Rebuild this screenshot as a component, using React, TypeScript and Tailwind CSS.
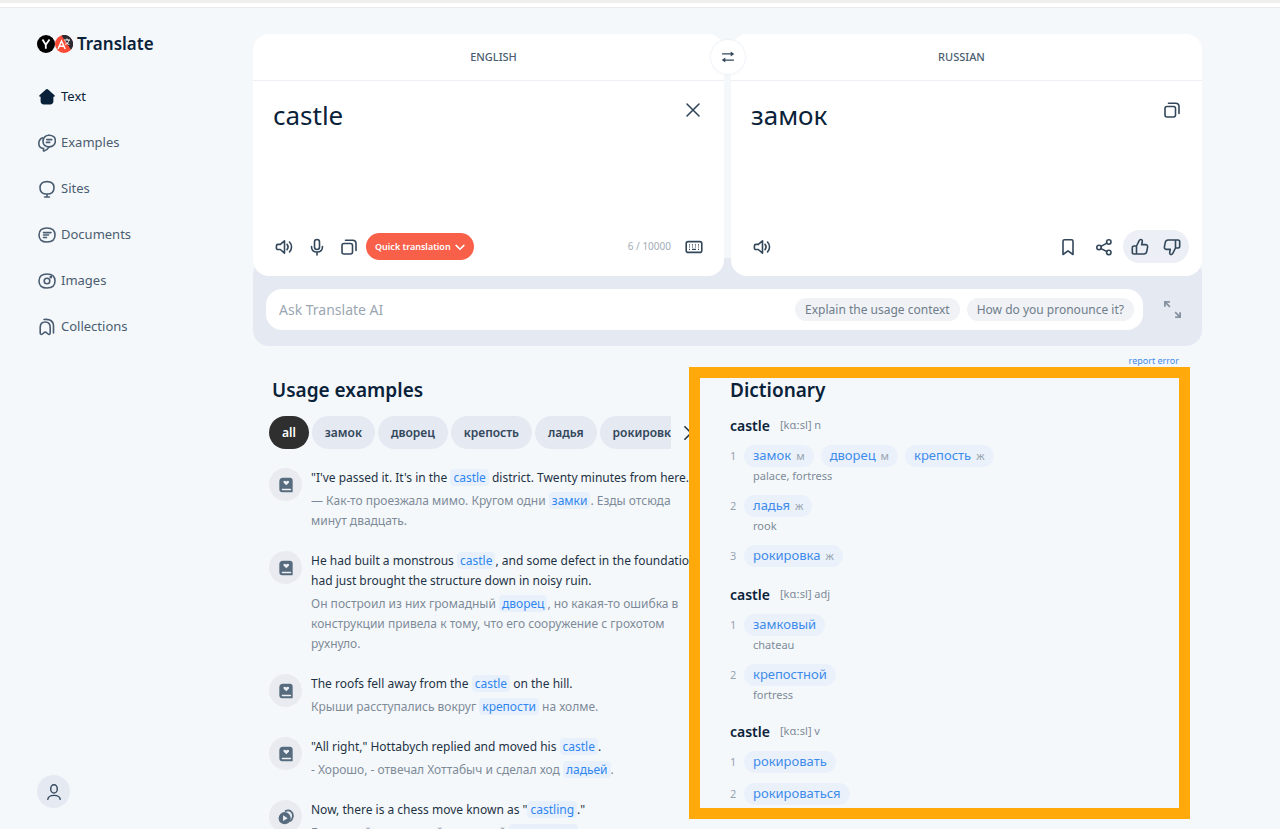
import type { ReactNode } from "react";

const NAV_ITEMS = [
  { label: "Text", icon: "home", active: true },
  { label: "Examples", icon: "chats" },
  { label: "Sites", icon: "sites" },
  { label: "Documents", icon: "docs" },
  { label: "Images", icon: "images" },
  { label: "Collections", icon: "collections" },
];

const FILTERS = ["замок", "дворец", "крепость", "ладья", "рокировка"];

const DICTIONARY = [
  {
    pos: "n",
    rows: [
      {
        words: [
          ["замок", "м"],
          ["дворец", "м"],
          ["крепость", "ж"],
        ],
        meaning: "palace, fortress",
      },
      { words: [["ладья", "ж"]], meaning: "rook" },
      { words: [["рокировка", "ж"]] },
    ],
  },
  {
    pos: "adj",
    rows: [
      { words: [["замковый"]], meaning: "chateau" },
      { words: [["крепостной"]], meaning: "fortress" },
    ],
  },
  {
    pos: "v",
    rows: [{ words: [["рокировать"]] }, { words: [["рокироваться"]] }],
  },
];

const ICONS: Record<string, ReactNode> = {
  home: (
    <path
      d="M7.600 1.700 1.500 7.200c-.7.6-.3 1.500.5 1.500h.6v4.600c0 2 1.200 3.200 3.200 3.200h6.400c2 0 3.200-1.200 3.200-3.200V8.700h.6c.8 0 1.200-.9.5-1.500l-6.100-5.500c-.8-.8-2-.8-2.800 0Z"
      fill="currentColor"
      stroke="none"
    />
  ),
  chats: (
    <>
      <path d="M11 1.200c3.800 0 6.400 2.100 6.400 5.400 0 3.800-2.700 6.100-6.200 6.300-1 1.700-2.900 3.400-5.200 4.100-.5.100-.7-.2-.6-.6l.2-1.900C2.600 14.100.8 12.200.8 9.500c0-2.600 1.400-4.700 3.800-5.700" />
      <path d="M11.200 12.900C7.400 12.900 5 10.800 5 7.500c0-3.800 2.600-6.300 6-6.300M8.800 5.600h5M8.400 8.400h3.300" />
    </>
  ),
  sites: <path d="M9 14c4.200 0 7-2 7-6.300S13.400 1.600 9 1.600 2 3.400 2 7.700 4.800 14 9 14Zm0 0v3M6.600 17h4.800" />,
  docs: (
    <>
      <path d="M9 2c5 0 8 2.200 8 7s-3 7-8 7-8-2.200-8-7 3-7 8-7Z" />
      <path d="M5.500 6.600h7.500M5.500 9h5M5.500 11.500h3" />
    </>
  ),
  images: (
    <>
      <path d="M9 2c5 0 8 2.200 8 7s-3 7-8 7-8-2.200-8-7 3-7 8-7Z" />
      <circle cx="9" cy="9" r="2.800" />
      <circle cx="12.800" cy="5.200" r=".6" fill="currentColor" />
    </>
  ),
  collections: (
    <>
      <path d="M2.200 9.500c0-3.400 1.400-5.500 5-5.500s5 2.100 5 5.500v5.600c0 1.300-1.200 1.800-2.100.9l-1.400-1.200c-.8-.8-2.100-.8-2.900 0L4.400 16c-.9.900-2.200.4-2.200-.9Z" />
      <path d="M6 1.500c6.500-.8 9.500 1.800 9.500 7V15" />
    </>
  ),
  sound: (
    <>
      <path d="M9.500 2.800v12.400L5.300 11.500H3c-1 0-1.600-.6-1.600-1.600V8c0-1 .6-1.600 1.600-1.600h2.300Z" strokeLinejoin="round" />
      <path d="M12 6.300c1.300 1.600 1.300 3.800 0 5.400M14.500 4c2.700 2.900 2.700 7.100 0 10" />
    </>
  ),
  mic: (
    <>
      <rect x="6.500" y="1.500" width="5" height="10" rx="2.500" />
      <path d="M3.500 8.500c0 3.500 2.200 5.500 5.500 5.500s5.500-2 5.500-5.500M9 14v3" />
    </>
  ),
  copy: (
    <>
      <rect x="2" y="5.500" width="10.500" height="10.500" rx="2" />
      <path d="M5.500 2.200h7.200c2 0 3.300 1.200 3.300 3.300v7" />
    </>
  ),
  keyboard: (
    <>
      <rect x="1.200" y="3.600" width="15.600" height="10.800" rx="2" />
      <path
        d="M4 6.800h1M7 6.800h1M10 6.800h1M13 6.800h1M4 9h1M7 9h1M10 9h1M13 9h1M4 11.300h1M7 11.300h4M13 11.300h1"
        strokeWidth="1.200"
        strokeLinecap="butt"
      />
    </>
  ),
  close: <path d="m3 3 12 12M15 3 3 15" />,
  bookmark: <path d="M4 3.200c0-1 .5-1.500 1.500-1.500h7c1 0 1.500.5 1.500 1.500v13.300l-5-3.700-5 3.700Z" strokeLinejoin="round" />,
  share: (
    <>
      <circle cx="4" cy="9.500" r="2.200" />
      <circle cx="13.800" cy="4" r="2.200" />
      <circle cx="13.800" cy="14.500" r="2.200" />
      <path d="m6 8.400 5.900-3.300M6 10.600l5.900 2.900" />
    </>
  ),
  like: (
    <path
      d="M5.500 8v8H3c-1 0-1.700-.7-1.700-1.700V9.700C1.300 8.600 2 8 3 8Zm0 0 2.700-5.300C8.500 1.900 9 1.500 9.700 1.500c1.100 0 1.800.9 1.600 2l-.6 3.100h3.700c1.500 0 2.500 1 2.200 2.500l-.9 4.600c-.3 1.500-1.400 2.300-2.900 2.300H5.500"
      strokeLinejoin="round"
    />
  ),
  expand: <path d="M1.800 6.500V1.800h4.700M2 2l4.500 4.500M16.200 11.500v4.700h-4.700M16 16l-4.500-4.500" strokeWidth="1.700" strokeLinecap="butt" />,
  user: (
    <>
      <ellipse cx="9" cy="5.500" rx="3.700" ry="4.700" />
      <path d="M2 17.200c.5-2.900 3-4.400 7-4.400s6.500 1.500 7 4.400" />
    </>
  ),
  swap: (
    <>
      <path d="M2 5h12M4 13h12" strokeWidth="1.800" />
      <path d="M12.500 1.800 17 5l-4.500 3.200ZM5.500 9.800 1 13l4.500 3.200Z" fill="currentColor" stroke="none" />
    </>
  ),
  down: <path d="m2 6 7 7 7-7" strokeWidth="2.800" />,
  right: <path d="m5 1 8 8-8 8" strokeWidth="2" />,
  book: (
    <>
      <path
        d="M5.500.8h8C15.300.8 16.500 2 16.500 3.800v12.400a1 1 0 0 1-1 1H5A3.400 3.400 0 0 1 1.500 13.800V4.800c0-2.500 1.500-4 4-4Z"
        fill="currentColor"
        stroke="none"
      />
      <path d="M5 14h9" stroke="#eef0f4" strokeWidth="1.700" />
      <path d="M9.300 9.300 6.400 6.500c-1.100-1.300.7-3.300 2.900-1.300 2.200-2 4 0 2.900 1.300Z" fill="#eef0f4" stroke="none" />
    </>
  ),
  video: (
    <>
      <path d="M8.500 2.200c5-2 9.300 1.700 8 7.200-.4 1.700-1.200 3-2.400 4" strokeWidth="2" />
      <circle cx="7.500" cy="10.300" r="6.800" fill="currentColor" stroke="none" />
      <path d="m5.700 7.100 5.200 3.200-5.200 3.200Z" fill="#eef0f4" stroke="none" />
    </>
  ),
};

const Icon = ({ name, className = "size-[18px]" }: { name: string; className?: string }) => (
  <svg
    viewBox="0 0 18 18"
    fill="none"
    stroke="currentColor"
    strokeWidth="1.600"
    strokeLinecap="round"
    className={`shrink-0 ${className}`}
    aria-hidden="true"
  >
    {ICONS[name]}
  </svg>
);

const Mark = ({ children }: { children: ReactNode }) => (
  <mark className="rounded bg-[#e8f1fb] px-[3px] text-[#2f86f0]">{children}</mark>
);

const Example = ({ icon = "book", source, target }: { icon?: string; source: ReactNode; target: ReactNode }) => (
  <li className="flex gap-[9px]">
    <span className="flex size-[33px] shrink-0 items-center justify-center rounded-full bg-[#e9ebf0] text-[#566b7e]">
      <Icon name={icon} className="size-4" />
    </span>
    <div className="text-[12px] leading-5 whitespace-nowrap">
      <p className="text-[#1d3345]">{source}</p>
      <p className="mt-[3px] text-[#7d8b98]">{target}</p>
    </div>
  </li>
);

const Sidebar = () => (
  <aside className="flex w-[253px] shrink-0 flex-col justify-between pt-6 pb-[21px] pl-[37px]">
    <div>
      <a href="#" className="flex h-6 items-center text-[17px] font-semibold text-[#0a2239]">
        <svg viewBox="0 0 36 18" className="mr-1 h-[18px] w-9" aria-hidden="true">
          <circle cx="9" cy="9" r="9" fill="#000" />
          <path d="m5.500 4.500 3.300 5.300v4M12.500 4.500 8.800 9.800" fill="none" stroke="#fff" strokeWidth="1.800" />
          <circle cx="27" cy="9" r="9" fill="#fb4a36" />
          <path d="M24.500.4A9 9 0 0 1 34 14.700Z" fill="#2b2b33" />
          <path d="m21 14 3.500-8 3.700 8M22.300 11.300h4.700" fill="none" stroke="#fff" strokeWidth="1.400" />
          <path d="M27 5h6M30 3.500V5M28 9.500c2.500-.8 3.800-2.300 4-4.500M28.500 6.500c.8 1.500 2 2.500 3.800 3" fill="none" stroke="#fff" strokeWidth="1" />
        </svg>
        Translate
      </a>
      <nav className="mt-[31px] flex flex-col gap-[26px] pl-px">
        {NAV_ITEMS.map((item) => (
          <a
            key={item.label}
            href="#"
            className={`flex h-5 items-center gap-[5px] text-[13px] ${item.active ? "text-[#0a2239]" : "text-[#4a5d70]"}`}
          >
            <Icon name={item.icon} />
            {item.label}
          </a>
        ))}
      </nav>
    </div>
    <button aria-label="Profile" className="flex size-[33px] items-center justify-center rounded-full bg-[#e5e9f2] text-[#33475b]">
      <Icon name="user" className="size-4" />
    </button>
  </aside>
);

const Translator = () => (
  <section>
    <div className="relative z-10 grid grid-cols-2 gap-[7px]">
      <div className="flex h-[242px] flex-col rounded-2xl bg-white">
        <button className="h-[47px] border-b border-[#eceff3] pl-[10px] text-[11px] font-medium text-[#4a5d70]">ENGLISH</button>
        <div className="flex flex-1 items-start justify-between pt-[14px] pr-[22px] pl-5">
          <textarea
            aria-label="Source text"
            defaultValue="castle"
            className="h-24 flex-1 resize-none bg-transparent text-[26px] leading-10 text-[#0a2239] outline-none"
          />
          <button aria-label="Clear" className="mt-[6px] text-[#33475b]">
            <Icon name="close" />
          </button>
        </div>
        <div className="flex items-center pr-[21px] pb-4 pl-[22px] text-[#33475b]">
          <button aria-label="Listen"><Icon name="sound" /></button>
          <button aria-label="Voice input" className="ml-[15px]"><Icon name="mic" /></button>
          <button aria-label="Copy source" className="ml-[14px]"><Icon name="copy" /></button>
          <button className="ml-2 flex h-[27px] items-center gap-1 rounded-full bg-[#f8604a] px-[9px] text-[9px] font-semibold text-white">
            Quick translation
            <Icon name="down" className="size-[10px]" />
          </button>
          <span className="mr-[14px] ml-auto text-[10px] text-[#a3adb8]">6 / 10000</span>
          <button aria-label="Keyboard"><Icon name="keyboard" /></button>
        </div>
      </div>

      <div className="flex h-[242px] flex-col rounded-2xl bg-white">
        <button className="h-[47px] border-b border-[#eceff3] pr-[10px] text-[11px] font-medium text-[#4a5d70]">RUSSIAN</button>
        <div className="flex flex-1 items-start justify-between pt-[14px] pr-[21px] pl-5">
          <p className="text-[26px] leading-10 text-[#0a2239]">замок</p>
          <button aria-label="Copy translation" className="mt-[6px] text-[#33475b]">
            <Icon name="copy" />
          </button>
        </div>
        <div className="flex items-center pr-[13px] pb-[13px] pl-[22px] text-[#33475b]">
          <button aria-label="Listen"><Icon name="sound" /></button>
          <button aria-label="Save" className="mr-[18px] ml-auto"><Icon name="bookmark" /></button>
          <button aria-label="Share"><Icon name="share" /></button>
          <div className="ml-[10px] flex h-[33px] items-center gap-[14px] rounded-full bg-[#eceff6] px-2">
            <button aria-label="Good translation"><Icon name="like" /></button>
            <button aria-label="Bad translation"><Icon name="like" className="size-[18px] rotate-180" /></button>
          </div>
        </div>
      </div>

      <button
        aria-label="Swap languages"
        className="absolute top-[6px] left-1/2 flex size-[34px] -translate-x-1/2 items-center justify-center rounded-full bg-white text-[#33475b] shadow-[0_0_3px_#dfe5ee]"
      >
        <Icon name="swap" className="size-[14px]" />
      </button>
    </div>

    <div className="-mt-[18px] flex items-center rounded-2xl bg-[#e5e9f2] pt-[31px] pb-4 pl-[13px]">
      <div className="flex h-[41px] flex-1 items-center gap-[7px] rounded-2xl bg-white pr-[9px] pl-[13px]">
        <input
          aria-label="Ask Translate AI"
          placeholder="Ask Translate AI"
          className="min-w-0 flex-1 text-[14px] outline-none placeholder:text-[#9aa6b2]"
        />
        <button className="h-[23px] rounded-full bg-[#f0f2f6] px-[10px] text-[12px] text-[#6f7d8b]">Explain the usage context</button>
        <button className="h-[23px] rounded-full bg-[#f0f2f6] px-[10px] text-[12px] text-[#6f7d8b]">How do you pronounce it?</button>
      </div>
      <button aria-label="Expand" className="mx-5 text-[#8792a0]">
        <Icon name="expand" className="size-[19px]" />
      </button>
    </div>
  </section>
);

const Examples = () => (
  <section className="min-w-0 flex-1 overflow-hidden pt-[11px] pl-4">
    <h2 className="pl-[3px] text-[19px] leading-6 font-semibold text-[#0a2239]">Usage examples</h2>
    <div className="mt-[14px] flex items-center">
      <div className="mr-[10px] flex min-w-0 flex-1 gap-[3px] overflow-hidden text-[12px] font-semibold">
        <button className="h-[33px] shrink-0 rounded-full bg-[#2f2f2f] px-[13px] text-white">all</button>
        {FILTERS.map((word) => (
          <button key={word} className="h-[33px] shrink-0 rounded-full bg-[#e5e9f2] px-[13px] text-[#33475b]">
            {word}
          </button>
        ))}
      </div>
      <button aria-label="More filters" className="-mr-[6px] text-[#1d3345]">
        <Icon name="right" className="size-[14px]" />
      </button>
    </div>
    <ul className="mt-[19px] flex flex-col gap-5">
      <Example
        source={<>"I've passed it. It's in the <Mark>castle</Mark> district. Twenty minutes from here."</>}
        target={<>— Как-то проезжала мимо. Кругом одни <Mark>замки</Mark>. Езды отсюда<br />минут двадцать.</>}
      />
      <Example
        source={<>He had built a monstrous <Mark>castle</Mark>, and some defect in the foundation<br />had just brought the structure down in noisy ruin.</>}
        target={<>Он построил из них громадный <Mark>дворец</Mark>, но какая-то ошибка в<br />конструкции привела к тому, что его сооружение с грохотом<br />рухнуло.</>}
      />
      <Example
        source={<>The roofs fell away from the <Mark>castle</Mark> on the hill.</>}
        target={<>Крыши расступались вокруг <Mark>крепости</Mark> на холме.</>}
      />
      <Example
        source={<>"All right," Hottabych replied and moved his <Mark>castle</Mark>.</>}
        target={<>- Хорошо, - отвечал Хоттабыч и сделал ход <Mark>ладьей</Mark>.</>}
      />
      <Example
        icon="video"
        source={<>Now, there is a chess move known as "<Mark>castling</Mark>."</>}
        target={<>Есть такой шахматный ход, такой <Mark>рокировка</Mark>.</>}
      />
    </ul>
  </section>
);

const Dictionary = () => (
  <section className="mr-3 shrink-0 basis-[501px] self-start border-[11px] border-[#ffa90a] pb-[3px] pl-[30px]">
    <h2 className="text-[19px] leading-6 font-semibold text-[#0a2239]">Dictionary</h2>
    <div className="mt-[13px] flex flex-col gap-[17px]">
      {DICTIONARY.map((group) => (
        <article key={group.pos}>
          <h3 className="flex h-5 items-center gap-[10px] text-[14px] font-semibold text-[#0a2239]">
            castle
            <span className="text-[11px] font-normal text-[#7d8b98]">[kɑːsl] {group.pos}</span>
          </h3>
          <ol className="mt-[10px] flex flex-col gap-[10px]">
            {group.rows.map((row, index) => (
              <li key={index} className="flex">
                <span className="w-[14px] text-[11px] leading-[22px] text-[#98a4b0]">{index + 1}</span>
                <div>
                  <div className="flex gap-[7px]">
                    {row.words.map(([word, gender]) => (
                      <a
                        key={word}
                        href="#"
                        className="flex h-[22px] items-center gap-[5px] rounded-full bg-[#eaf1fb] px-[9px] text-[13px] text-[#3d8bea]"
                      >
                        {word}
                        {gender && <span className="text-[11px] text-[#98a4b0]">{gender}</span>}
                      </a>
                    ))}
                  </div>
                  {row.meaning && (
                    <p className="pl-[9px] text-[11px] leading-[18px] text-[#7d8b98]">{row.meaning}</p>
                  )}
                </div>
              </li>
            ))}
          </ol>
        </article>
      ))}
    </div>
  </section>
);

const App = () => {
  return (
    <div className="flex h-screen flex-col overflow-hidden bg-[#f5f8fb] font-['Noto_Sans',sans-serif]">
      <header className="h-2 shrink-0 border-t-[3px] border-b border-t-[#efefed] border-b-[#e8ebee] bg-white" />
      <div className="flex min-h-0 flex-1">
        <Sidebar />
        <main className="mr-[78px] min-w-0 flex-1 pt-[26px]">
          <Translator />
          <div className="flex h-[21px] items-end justify-end pr-[23px]">
            <a href="#" className="text-[9px] leading-3 text-[#3d8bea]">report error</a>
          </div>
          <div className="flex">
            <Examples />
            <Dictionary />
          </div>
        </main>
      </div>
    </div>
  );
};

export default App;
